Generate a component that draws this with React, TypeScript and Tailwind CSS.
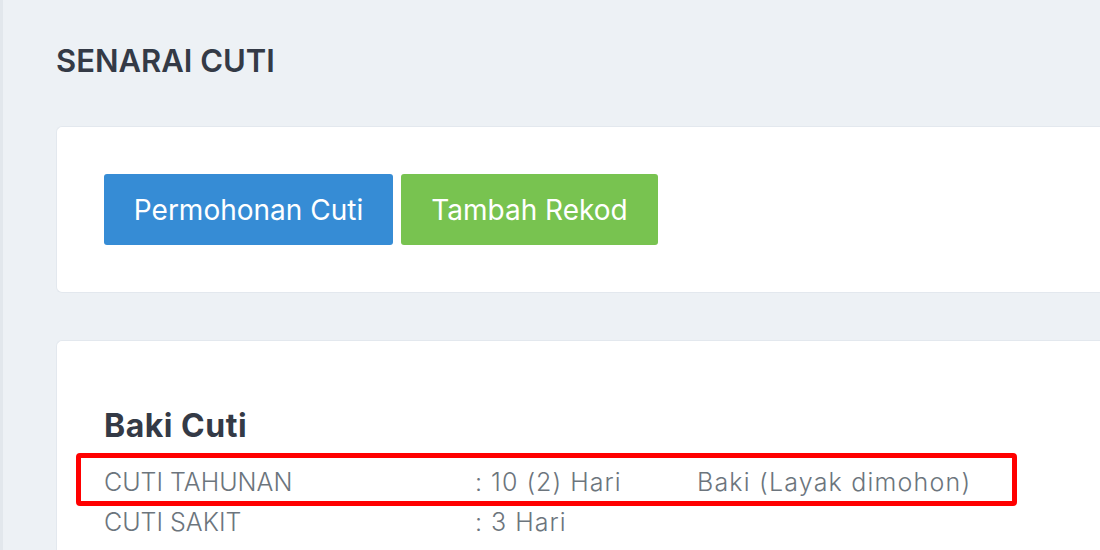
import React from "react";

export default function App() {
  return (
    <div className="min-h-[550px] w-[1100px] overflow-hidden bg-[#edf1f5] border-l-[3px] border-[#e2e7ec] font-['Inter',sans-serif]">
      <div className="pl-[53px] pt-[43px]">
        <h1 className="text-[31px] leading-[36px] font-semibold text-[#343a46]">SENARAI CUTI</h1>
        <div className="mt-[47px] rounded-l-[6px] bg-white border border-r-0 border-[#e3e8ee] pl-[47px] py-[47px] flex gap-2">
          <button className="h-[71px] w-[289px] rounded-[3px] bg-[#368cd5] text-white text-[28px]">Permohonan Cuti</button>
          <button className="h-[71px] w-[257px] rounded-[3px] bg-[#78c350] text-white text-[28px]">Tambah Rekod</button>
        </div>
        <div className="mt-[47px] rounded-tl-[6px] bg-white border border-r-0 border-b-0 border-[#e3e8ee] pl-[47px] pt-[65px] h-[220px]">
          <h2 className="text-[32px] leading-[40px] font-bold tracking-[0.5px] text-[#343a46]">Baki Cuti</h2>
          <div className="mt-[17px] text-[25px] text-[#6c757d] font-light">
            <div className="relative flex h-[40px] items-center">
              <div className="w-[371px]">CUTI TAHUNAN</div>
              <div className="w-[222px] tracking-[1px]">: 10 (2) Hari</div>
              <div className="tracking-[1.2px]">Baki (Layak dimohon)</div>
              <div className="absolute left-[-28px] top-[-10px] w-[941px] h-[53px] border-[5px] border-[#ff0000] rounded-[4px]"></div>
            </div>
            <div className="flex h-[40px] items-center">
              <div className="w-[371px]">CUTI SAKIT</div>
              <div className="w-[222px] tracking-[1px]">: 3 Hari</div>
            </div>
          </div>
        </div>
      </div>
    </div>
  );
}
